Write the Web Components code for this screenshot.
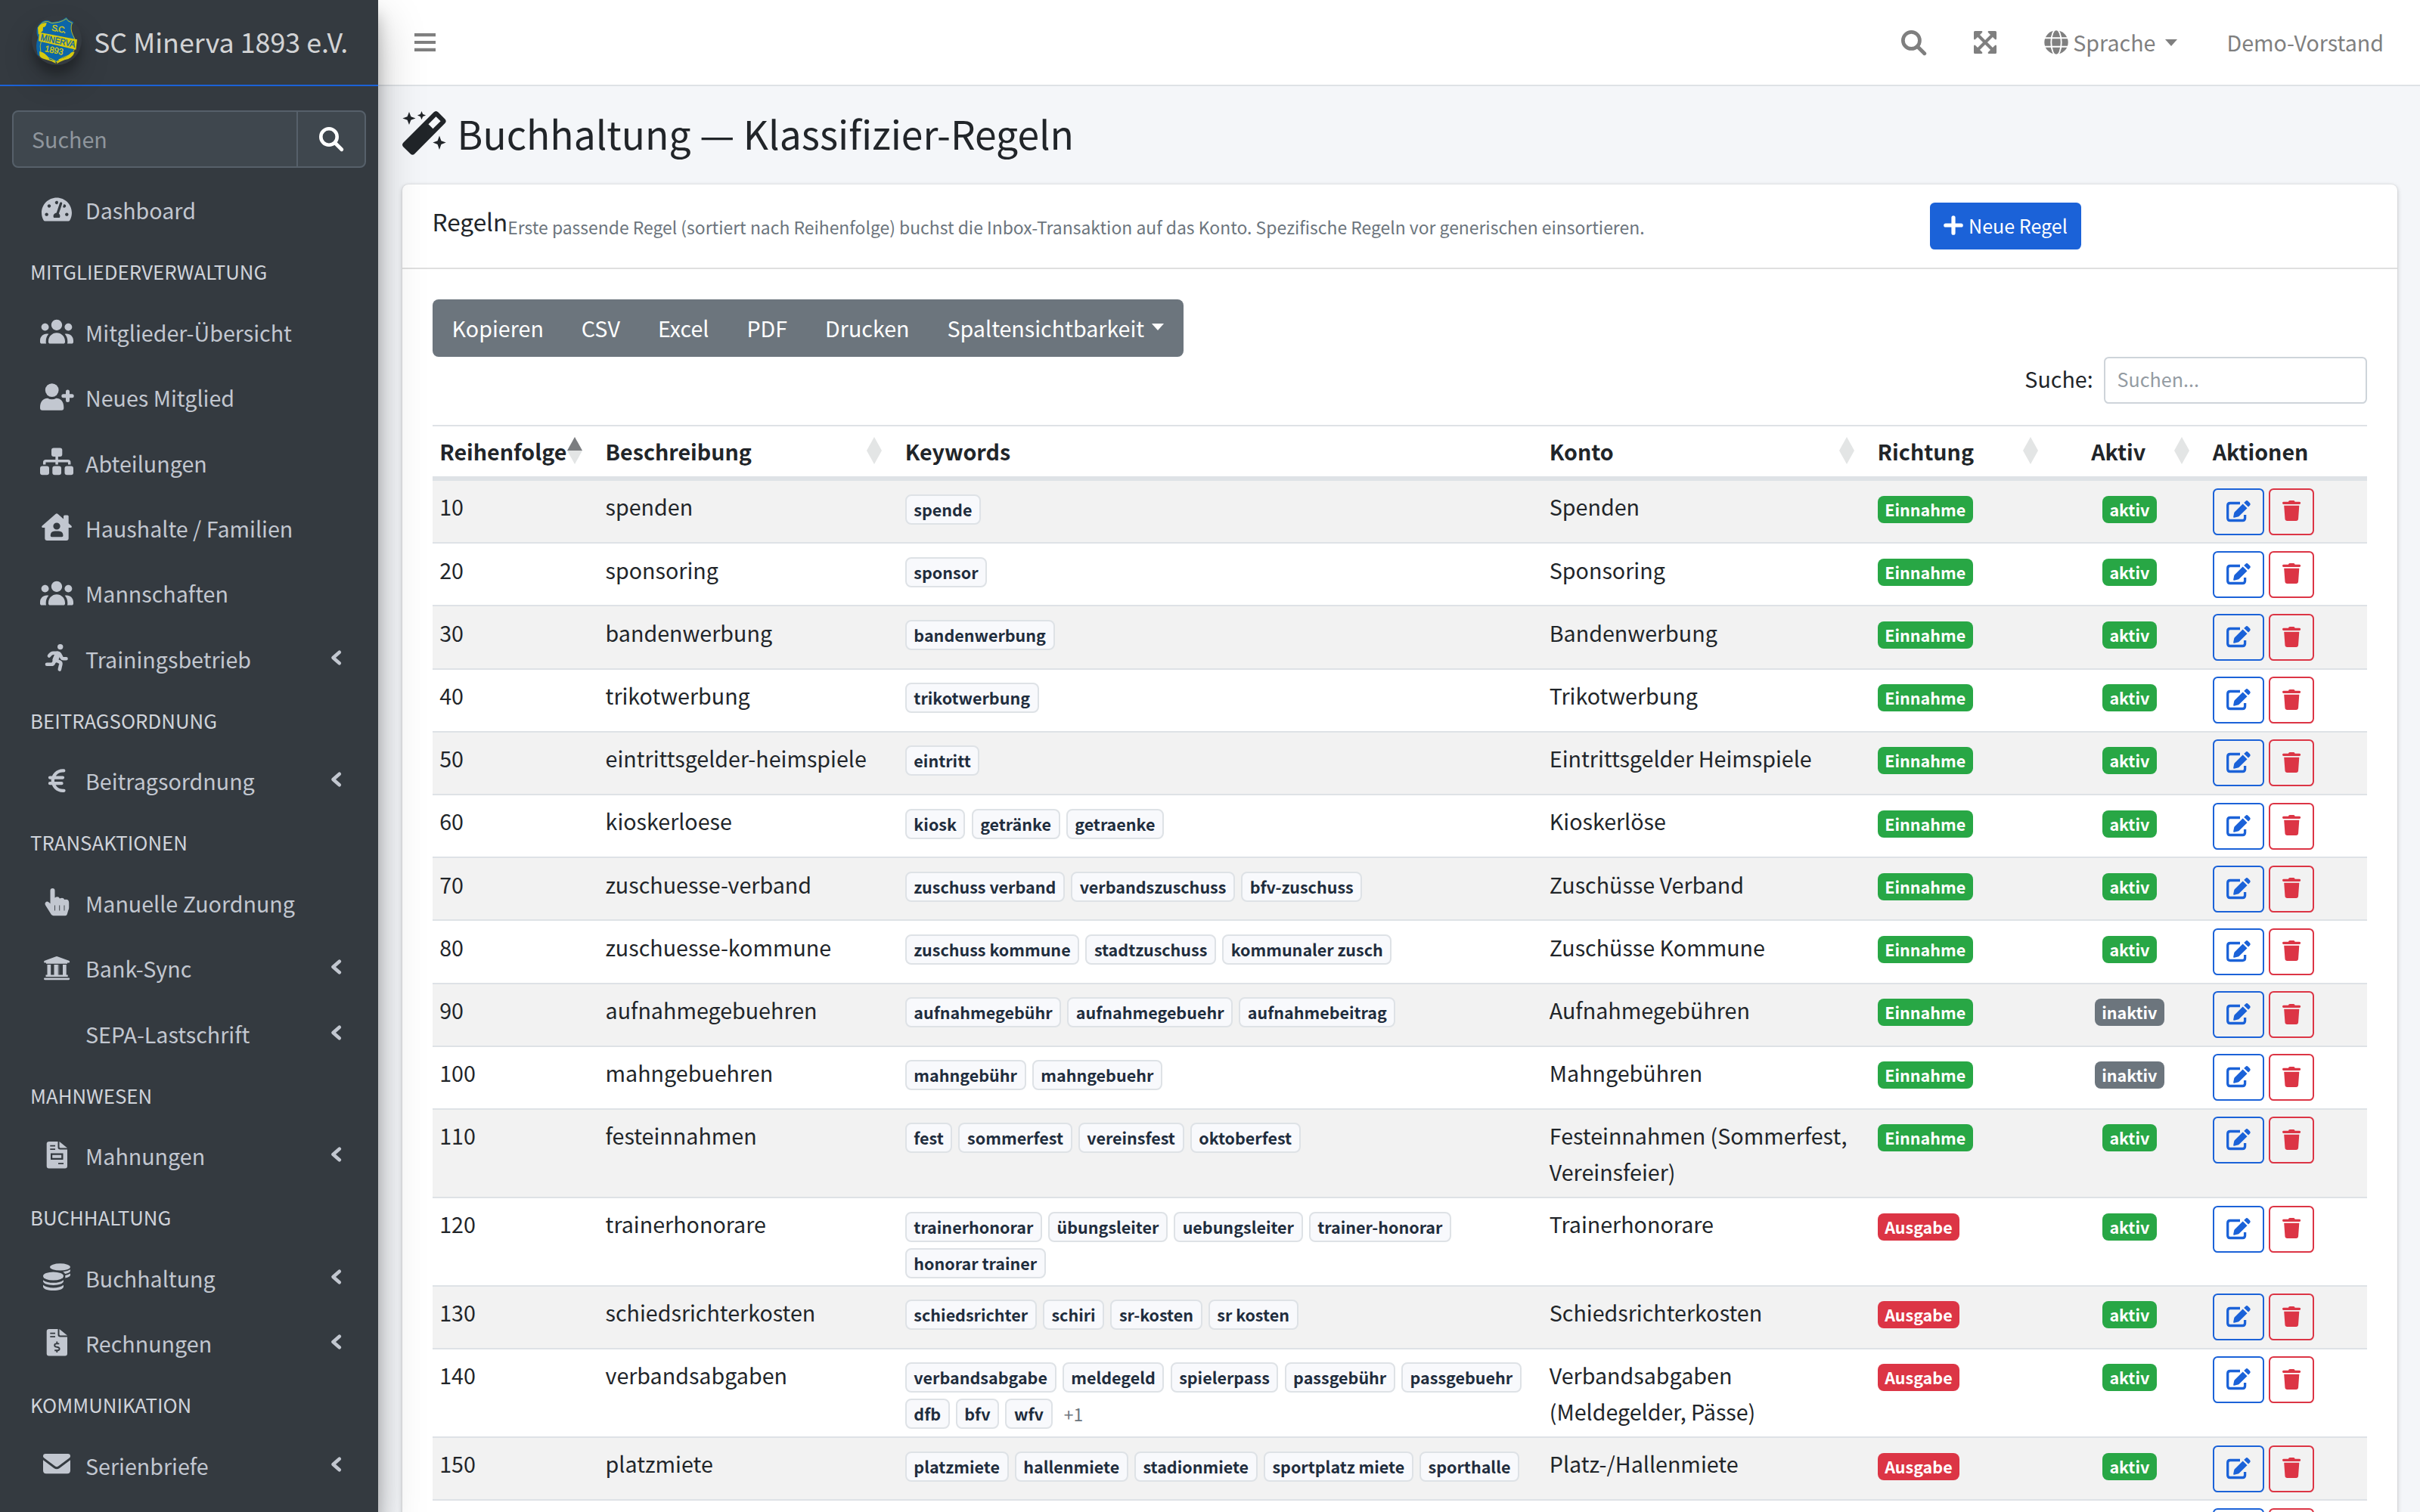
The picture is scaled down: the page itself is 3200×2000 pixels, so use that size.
<!DOCTYPE html>
<html lang="de">
<head>
<meta charset="utf-8">
<title>Buchhaltung — Klassifizier-Regeln</title>
<style>
    html, body {
        margin: 0;
        width: 3200px;
        height: 2000px;
        overflow: hidden;
    }

    body {
        font-family: "Noto Sans CJK SC", "Noto Sans", sans-serif;
        font-size: 28.65px;
        line-height: 48px;
        color: #212529;
        background: #f4f6f9;
        --primary: #1b62d8;
        --danger: #dc3545;
        --success: #28a745;
        --secondary: #6c757d;
        --line: #dee2e6;
    }
</style>
</head>
<body>
<app-shell></app-shell>

<script>
const ICONS = {
    gauge: [44, 44, '<path transform="translate(2 4.2) scale(.0694)" d="M288 32C128.94 32 0 160.94 0 320c0 52.8 14.25 102.26 39.06 144.8 5.61 9.62 16.3 15.2 27.44 15.2h443c11.14 0 21.83-5.58 27.44-15.2C561.75 422.26 576 372.8 576 320c0-159.06-128.94-288-288-288zm0 64c14.71 0 26.58 10.13 30.32 23.65-1.11 2.26-2.64 4.23-3.45 6.67l-9.22 27.67c-5.13 3.49-10.97 6.01-17.64 6.01-17.67 0-32-14.33-32-32S270.33 96 288 96zM96 384c-17.67 0-32-14.33-32-32s14.33-32 32-32 32 14.33 32 32-14.33 32-32 32zm48-160c-17.67 0-32-14.33-32-32s14.33-32 32-32 32 14.33 32 32-14.33 32-32 32zm246.77-72.41l-61.33 184C343.13 347.33 352 364.54 352 384c0 11.72-3.38 22.55-8.88 32H232.88c-5.5-9.45-8.88-20.28-8.88-32 0-33.94 26.5-61.43 59.9-63.59l61.34-184.01c4.17-12.56 17.73-19.45 30.36-15.17 12.57 4.19 19.35 17.79 15.17 30.36zm14.66 57.2l15.52-46.55c3.47-1.29 7.13-2.23 11.05-2.23 17.67 0 32 14.33 32 32s-14.33 32-32 32c-11.38-.01-20.89-6.28-26.57-15.22zM480 384c-17.67 0-32-14.33-32-32s14.33-32 32-32 32 14.33 32 32-14.33 32-32 32z"/>'],
    users: [44, 44, '<path transform="translate(0 1.2) scale(.06875)" d="M320 80C377.4 80 424 126.6 424 184C424 241.4 377.4 288 320 288C262.6 288 216 241.4 216 184C216 126.6 262.6 80 320 80zM96 152C135.8 152 168 184.2 168 224C168 263.8 135.8 296 96 296C56.2 296 24 263.8 24 224C24 184.2 56.2 152 96 152zM0 480C0 409.3 57.3 352 128 352C140.8 352 153.2 353.9 164.9 357.4C132 394.2 112 442.8 112 496L112 512C112 523.4 114.4 534.2 118.7 544L32 544C14.3 544 0 529.7 0 512L0 480zM521.3 544C525.6 534.2 528 523.4 528 512L528 496C528 442.8 508 394.2 475.1 357.4C486.8 353.9 499.2 352 512 352C582.7 352 640 409.3 640 480L640 512C640 529.7 625.7 544 608 544L521.3 544zM472 224C472 184.2 504.2 152 544 152C583.8 152 616 184.2 616 224C616 263.8 583.8 296 544 296C504.2 296 472 263.8 472 224zM160 496C160 407.6 231.6 336 320 336C408.4 336 480 407.6 480 496L480 512C480 529.7 465.7 544 448 544L192 544C174.3 544 160 529.7 160 512L160 496z"/>'],
    userPlus: [44, 44, '<circle cx="15.7" cy="13.1" r="8.9"/><path d="M0 35.5C0 28 4.500 23.700 10 23.700q5.700 3 11.400 0c5.500 0 9.900 4.300 9.900 11.800v1.200a3 3 0 0 1-3 3H3a3 3 0 0 1-3-3z"/><path d="M36.500 15v11.600M30.800 20.800h11.400" fill="none" stroke="currentColor" stroke-width="5" stroke-linecap="round"/>'],
    sitemap: [44, 44, '<rect x="15" y="3.6" width="14.3" height="11.4" rx="3"/><rect y="27.6" width="12" height="11.7" rx="3"/><rect x="16.3" y="27.6" width="11.7" height="11.7" rx="3"/><rect x="32.5" y="27.6" width="11.5" height="11.7" rx="3"/><path d="M22.100 15v10.600M5.700 25.600v-2.900q0-2 2-2h29q2 0 2 2v2.900" fill="none" stroke="currentColor" stroke-width="3.5"/>'],
    house: [44, 44, '<path fill-rule="evenodd" d="M20.400 3.900q1.600-1.400 3.200 0l7.400 6.500V7q0-1.500 1.500-1.500h3.700q1.500 0 1.500 1.500v9.200l3.700 3.300q1.300 1.300-.2 2.600h-3.500V36q0 3-3 3H9.300q-3 0-3-3V22.100H2.900q-1.600-1.300-.2-2.600zM22 15.400a4.600 4.600 0 1 0 .010 9.200 4.600 4.600 0 0 0 0-9.200zM13.700 32.500q0 1.700 1.700 1.700h13.400q1.700 0 1.700-1.700 0-6-6-6h-4.800q-6 0-6 6z"/>'],
    running: [44, 44, '<circle cx="26.7" cy="7.6" r="3.7"/><g fill="none" stroke="currentColor" stroke-linecap="round" stroke-linejoin="round"><path stroke-width="4.6" d="M12 19.500q2.500-3.800 5.500-3.800h5.500q2.500 0 3.600 2.500l1.900 3.600q.8 1.400 2.400 1.400h3.600M9 30.700h6q2 0 2.800-1.600l.8-1.600M20.500 25l5.400 2.600q1.800 1 1.500 2.800l-1.600 7.200"/><path stroke-width="7.5" d="M23.200 17.500l-3 7.300"/></g>'],
    euro: [44, 44, '<path d="M31.300 9.400h-1.300a13.200 13.200 0 0 0 0 26.400h1.500M13 18.600h17M13 26.200h15.500" fill="none" stroke="currentColor" stroke-width="4.3" stroke-linecap="round"/>'],
    hand: [44, 44, '<path d="M13.500 6a3 3 0 0 1 6 0v9.500q4.500-3 6.500 1 4.500-2.300 6.300 1.500 5.800-1.200 5.900 4v6c0 2-.5 3.500-1.200 5l-1.200 4.300q-.5 1.900-2.500 1.900H17.700q-1.500 0-2.700-1.100L7 25.300q-1.300-2.200.3-3.900 2-1.700 4.200 0l2 1.800z"/><path d="M19.500 25.500v7M25.700 25.500v7M32 25.500v7" stroke="#343a40" stroke-width=".9"/>'],
    bank: [44, 44, '<path d="M21 7.300q1-.5 2 0l15.200 5.400q1 .5 1 1.500 0 1.400-1.500 1.400H36v1.200H8v-1.200H6.500Q5 15.600 5 14.200q0-1 1-1.500zM9.500 18h4.700v13.500h4.300V18h5.300v13.500h.5V18h1v13.500h4.700V18h4.700v13.500h2v2.600H7.500v-2.600h2zM6.300 35.400h31.400q1.500 0 1.500 1.400t-1.500 1.400H6.300Q5 38.200 5 36.800t1.300-1.400z"/><path d="M24 18h2v13.500h-2z" fill="#343a40" opacity=".5"/>'],
    invoice: [44, 44, '<path fill-rule="evenodd" d="M12 4h11.500v7.500q0 3 3 3H36v22q0 3-3 3H11.700q-3 0-3-3V7q0-3 3.300-3zM25.500 4L36 12.500h-9q-1.500 0-1.500-1.500zM13.300 8.800v1.700H20V8.800zm0 4.500V15H20v-1.700zM14 19.500v8.500h16.500v-8.500zm2.200 2.200h12v4.100h-12zM24 32.300V34h7v-1.700z"/>'],
    invoiceDollar: [44, 44, '<path fill-rule="evenodd" d="M12 4h11.500v7.500q0 3 3 3H36v22q0 3-3 3H11.700q-3 0-3-3V7q0-3 3.300-3zM25.500 4L36 12.500h-9q-1.500 0-1.500-1.500zM13.300 8.800v1.700H20V8.800zm0 4.500V15H20v-1.700z"/><path d="M25.300 23.400h-3.800q-2.300.2-2.300 2t2.300 2.200l1.800.4q2.300.5 2.300 2.300t-2.400 2h-4M22.300 20.500v3M22.300 32v3" fill="none" stroke="#343a40" stroke-width="1.9"/>'],
    coins: [44, 44, '<ellipse cx="26.5" cy="7.9" rx="13.4" ry="4.6"/><path d="M31.500 14q5-.6 8.500-2.700v1.500q0 3-7 4.300-1-1.800-3-3zM33.300 19q4-.6 6.700-2.400v1.700q0 3-6.700 4.200z"/><ellipse cx="17.5" cy="20" rx="13.5" ry="5.6"/><path d="M4 25.200c3.500 2.700 8 3.600 13.500 3.600s10-.9 13.500-3.600v1.600c0 3-6 5.200-13.500 5.200S4 29.800 4 26.800zM4 31.800c3.500 2.700 8 3.600 13.500 3.600s10-.9 13.500-3.600v2.100c0 3-6 5.200-13.500 5.200S4 36.900 4 33.900z"/>'],
    envelope: [44, 44, '<path d="M7.300 8h29.400Q40 8 40 11.200q0 1.500-1.300 2.400L24 24.600q-2 1.500-4 0L5.300 13.600Q4 12.700 4 11.200 4 8 7.300 8zM4 16.200l14.300 10.700q3.700 2.700 7.400 0L40 16.200V30q0 4.200-4.200 4.200H8.200Q4 34.200 4 30z"/>'],
    search: [32, 32, '<circle cx="13" cy="13" r="10.7" fill="none" stroke="currentColor" stroke-width="4.6"/><path d="M21 21l8.800 8.800" stroke="currentColor" stroke-width="4.8" stroke-linecap="round"/>'],
    expand: [30, 30, '<path d="M5 5l20 20M25 5L5 25" stroke="currentColor" stroke-width="4.2"/><path d="M1.500 0h8.700q2 .5.600 2.300L2.300 10.800Q.5 12.300 0 10.200V1.500Q0 0 1.500 0zM28.500 0h-8.700q-2 .5-.6 2.300l8.500 8.500q1.800 1.500 2.300-.6V1.500Q30 0 28.500 0zM1.500 30h8.700q2-.5.600-2.300l-8.500-8.500q-1.800-1.500-2.300.6v8.700Q0 30 1.500 30zM28.500 30h-8.700q-2-.5-.6-2.300l8.500-8.500q1.800-1.500 2.300.6v8.700q0 1.500-1.500 1.500z"/>'],
    globe: [32, 32, '<circle cx="16" cy="16" r="15.7"/><path d="M0 10.300h32M0 21.700h32" stroke="#fff" stroke-width="1.9"/><ellipse cx="16" cy="16" rx="6.7" ry="17" fill="none" stroke="#fff" stroke-width="1.9"/>'],
    bars: [28, 24, '<path d="M0 0h28v4.200H0zM0 9.900h28v4.200H0zM0 19.800h28V24H0z"/>'],
    wand: [58, 58, '<path fill-rule="evenodd" d="M41.500 1.500q3-3 6 0l8.700 8.700q3 3 0 6L16.500 56.300q-3 3-6 0L1.500 47.500q-3-3 0-6zM44.500 7.200L34.500 17.300l6 6L50.600 13.200z"/><path d="M9 1l2.400 6.200L17.500 9.500l-6.100 2.300L9 18 6.600 11.800.4 9.500l6.200-2.300zM25.500 0l1.600 4 4 1.600-4 1.600-1.600 4-1.600-4-4-1.600 4-1.600zM49 32.500l2.400 6.700 6.300 2.400-6.300 2.400L49 51l-2.400-7-6.200-2.400 6.200-2.400z"/>'],
    plus: [26, 26, '<path d="M13 2.800v20.400M2.800 13h20.400" stroke="currentColor" stroke-width="5.2" stroke-linecap="round"/>'],
    edit: [32, 28, '<path d="M18 3.500H5Q1.700 3.500 1.700 6.800v16.400q0 3.300 3.300 3.300h16.300q3.300 0 3.300-3.300V19" fill="none" stroke="currentColor" stroke-width="3.3"/><path d="M25.300.9q1.700-1.600 3.400 0l2.300 2.300q1.600 1.700 0 3.400l-2 2L23.200 2.900zM21.700 4.400l5.800 5.800L16.800 20.800q-.6.600-1.500.8l-5 1.100q-1.400.2-1.100-1.200l1-4.900q.2-.9.900-1.600z"/>'],
    trash: [26, 28, '<path d="M8.500 1.400q.4-1.400 2-1.400h4.600q1.600 0 2 1.400l.2.400h6.200q1.700 0 1.700 1.700t-1.700 1.700h-22Q0 5.200 0 3.500t1.500-1.700h6.700zM2.300 7h20.900l-1.300 18.200q-.3 2.900-3 2.900H6.600q-2.700 0-3-2.900z"/>'],
    chevron: [14, 20, '<path d="M11.800 2.700L3.500 10l8.300 7.300" fill="none" stroke="currentColor" stroke-width="4.6" stroke-linecap="round" stroke-linejoin="round"/>'],
    caret: [16, 9, '<path d="M0 0h16L8 9z"/>']
};

function define( name, html, setup ) {
    const template = document.createElement('template');
    template.innerHTML = html;
    window.customElements.define( name, class extends HTMLElement {
        connectedCallback() {
            if ( this.shadowRoot ) return;
            this.attachShadow( { mode: "open" } );
            this.shadowRoot.appendChild( template.content.cloneNode( true ) );
            if ( setup ) setup.call( this, this.shadowRoot );
        }
    } );
}

define( 'app-icon', `
    <style>
        :host { display: block; flex: none; }
        svg { display: block; fill: currentColor; overflow: visible; }
    </style>
`, function ( root ) {
    const [ w, h, body ] = ICONS[ this.getAttribute('name') ];
    const width = Number( this.getAttribute('width') ) || w;
    root.innerHTML += `<svg viewBox="0 0 ${w} ${h}" width="${width}" height="${width * h / w}">${body}</svg>`;
} );

define( 'club-logo', `
    <style>
        :host {
            display: block;
            width: 66px;
            height: 66px;
            border-radius: 50%;
            box-shadow: 0 20px 40px rgba(0,0,0,.19), 0 12px 12px rgba(0,0,0,.23);
        }
        svg { display: block; }
        text { font-family: "Liberation Sans", sans-serif; stroke-width: 1.2; }
    </style>
    <svg viewBox="36 30 198 198" width="66" height="66">
        <path d="M57 80Q72 54 88 51q14-3 20 3 8 6 14 3 18-1 38-10l13-9 9 11 19 8q2 5-5 9-7 17 1 38 13 16 12 42-2 36-30 47-30 8-49 27-20-15-48-22-27-6-24-18-9-30 3-62-9-15-4-38z" fill="#0c66a8"/>
        <path d="M62 80Q75 58 90 56q12-2 18 3 8 5 16 2 20-1 36-9l13-8 7 9 16 8q-9 22 3 48 11 14 10 40-2 31-29 41-28 8-45 25-18-13-45-20-22-6-18-15-7-26 4-58-7-20-6-42z" fill="none" stroke="#d6c90e" stroke-width="2.5"/>
        <path d="M60 80q12-20 35-20-2 18-14 18l-1 14-18 15zM66 98l150 29-5 40-148-34zM66 174q28 5 40 32l21 5 5 11q-20-11-45-17-20-6-20-16zM206 176q-8 26-40 32-20 8-31 15l2-12 7 1q-5-9 5-9 25-3 44-25z" fill="#d6c90e"/>
        <text transform="translate(113 91) rotate(11)" font-size="34" textLength="58" fill="#d6c90e" stroke="#d6c90e">S.C.</text>
        <text transform="translate(69 129) rotate(12)" font-size="35" textLength="140" lengthAdjust="spacingAndGlyphs" fill="#0c66a8" stroke="#0c66a8">MINERVA</text>
        <text transform="translate(86 174) rotate(11)" font-size="35" textLength="74" lengthAdjust="spacingAndGlyphs" fill="#d6c90e" stroke="#d6c90e">1893</text>
    </svg>
` );

define( 'nav-item', `
    <style>
        :host {
            display: flex;
            align-items: center;
            height: 80px;
            margin: 0 16px 6.4px;
            padding: 0 33px 0 37px;
            color: #c2c7d0;
        }
        .icon { width: 44px; height: 44px; margin: 0 16px 4px 0; }
        .label { flex: 1; padding-bottom: 1px; white-space: nowrap; }
        .arrow { margin-bottom: 5px; }
    </style>
    <div class="icon"></div>
    <span class="label"><slot></slot></span>
`, function ( root ) {
    if ( this.hasAttribute('icon') ) {
        root.querySelector('.icon').innerHTML = `<app-icon name="${this.getAttribute('icon')}"></app-icon>`;
    }
    if ( this.hasAttribute('open') ) {
        root.querySelector('.label').insertAdjacentHTML( 'afterend', '<app-icon class="arrow" name="chevron"></app-icon>' );
    }
} );

define( 'nav-header', `
    <style>
        :host {
            display: block;
            padding: 12px 40px 20px;
            font-size: 25.8px;
            line-height: 43.2px;
            color: #d0d4db;
            text-transform: uppercase;
        }
    </style>
    <slot></slot>
` );

define( 'side-bar', `
    <style>
        :host {
            display: block;
            position: relative;
            z-index: 2;
            width: 500px;
            height: 2000px;
            background: #343a40;
            box-shadow: 0 28px 56px rgba(0,0,0,.25), 0 20px 20px rgba(0,0,0,.22);
        }
        .brand {
            display: flex;
            box-sizing: border-box;
            height: 114px;
            padding: 20px 0 0 42px;
            gap: 16px;
            border-bottom: 2px solid var( --primary );
            color: rgba(255,255,255,.8);
            font-size: 35.8px;
            line-height: 68px;
            white-space: nowrap;
        }
        .search {
            display: flex;
            box-sizing: border-box;
            height: 76px;
            margin: 32px 16px 16.8px;
            border: 2px solid #56606a;
            border-radius: 8px;
            background: #3f474e;
            color: #8f969d;
            line-height: 72px;
        }
        .search span { flex: 1; padding-left: 24px; }
        .search div {
            display: flex;
            align-items: center;
            justify-content: center;
            width: 88px;
            border-left: 2px solid #56606a;
            color: #fff;
        }
    </style>
    <div class="brand"><club-logo></club-logo><span>SC Minerva 1893 e.V.</span></div>
    <div class="search"><span>Suchen</span><div><app-icon name="search"></app-icon></div></div>
    <slot></slot>
` );

define( 'top-bar', `
    <style>
        :host {
            display: flex;
            align-items: center;
            box-sizing: border-box;
            height: 114px;
            padding: 0 48px;
            border-bottom: 2px solid var( --line );
            background: #fff;
            color: #7f7f7f;
        }
        .space { flex: 1; }
        span { padding-bottom: 1px; white-space: nowrap; }
    </style>
    <app-icon name="bars"></app-icon>
    <div class="space"></div>
    <app-icon name="search" width="33" style="margin-right: 63px"></app-icon>
    <app-icon name="expand" style="margin-right: 63px"></app-icon>
    <app-icon name="globe" style="margin-right: 6px"></app-icon>
    <span style="margin-right: 13px">Sprache</span>
    <app-icon name="caret" style="margin-right: 65px"></app-icon>
    <span>Demo-Vorstand</span>
` );

define( 'export-bar', `
    <style>
        :host {
            display: flex;
            width: max-content;
            height: 76px;
            border-radius: 8px;
            background: var( --secondary );
            color: #fff;
            line-height: 75px;
        }
        span { display: flex; padding: 0 26px; white-space: nowrap; }
        span + span { margin-left: -2px; }
        app-icon { margin: 32px 0 0 10px; }
    </style>
    <span>Kopieren</span><span>CSV</span><span>Excel</span><span>PDF</span><span>Drucken</span>
    <span>Spaltensichtbarkeit<app-icon name="caret"></app-icon></span>
` );

define( 'sort-mark', `
    <style>
        :host { display: block; }
        svg { display: block; }
        path { fill: #e3e5e5; }
        :host([asc]) .up { fill: #7b7d80; }
    </style>
    <svg width="20" height="36" viewBox="0 0 20 36"><path class="up" d="M10 0l10 18H0z"/><path d="M10 36l10-18H0z"/></svg>
` );

const GRID = `
    display: grid;
    grid-template-columns: 219.4px 396.2px 852px 433.8px 242.6px 200.6px 1fr;
`;

define( 'table-head', `
    <style>
        :host {
            ${GRID}
            box-sizing: border-box;
            height: 74px;
            border-top: 2px solid var( --line );
            border-bottom: 6px solid var( --line );
            font-weight: 700;
            line-height: 65px;
        }
        div { display: flex; justify-content: space-between; padding: 0 21px 0 9.6px; white-space: nowrap; }
        div span { width: 0; }
        .center { justify-content: flex-end; }
        .center span { width: auto; margin-right: 38px; }
        sort-mark { margin-top: 14px; }
    </style>
    <div><span>Reihenfolge</span><sort-mark asc></sort-mark></div>
    <div><span>Beschreibung</span><sort-mark></sort-mark></div>
    <div><span>Keywords</span></div>
    <div><span>Konto</span><sort-mark></sort-mark></div>
    <div><span>Richtung</span><sort-mark></sort-mark></div>
    <div class="center"><span>Aktiv</span><sort-mark></sort-mark></div>
    <div><span>Aktionen</span></div>
` );

define( 'app-badge', `
    <style>
        :host {
            display: block;
            box-sizing: border-box;
            width: max-content;
            height: 36px;
            padding: 0 9.6px;
            border-radius: 8px;
            font-size: 21.5px;
            font-weight: 700;
            line-height: 35px;
            white-space: nowrap;
            color: #fff;
            background: var( --success );
        }
        :host([kind="red"]) { background: var( --danger ); }
        :host([kind="grey"]) { background: var( --secondary ); }
        :host([kind="keyword"]) {
            height: 40px;
            border: 2px solid var( --line );
            color: #1f2d3d;
            background: #f8f9fc;
        }
    </style>
    <slot></slot>
` );

define( 'row-actions', `
    <style>
        :host { display: flex; gap: 6.4px; }
        div {
            display: flex;
            align-items: center;
            justify-content: center;
            box-sizing: border-box;
            width: 68px;
            height: 62px;
            border: 2px solid currentColor;
            border-radius: 6.4px;
            color: var( --primary );
        }
        .delete { width: 60px; color: var( --danger ); }
        app-icon { margin-bottom: 2px; }
    </style>
    <div><app-icon name="edit"></app-icon></div>
    <div class="delete"><app-icon name="trash" width="25"></app-icon></div>
` );

define( 'rule-row', `
    <style>
        :host {
            ${GRID}
            box-sizing: border-box;
            min-height: 83.2px;
            border-bottom: 2px solid var( --line );
        }
        :host([odd]) { background: #f2f2f2; }
        .cell { padding: 10.4px 9.6px 8.8px; }
        .keywords { display: flex; flex-wrap: wrap; align-content: flex-start; gap: 8px 8.1px; padding: 17.6px 0 9px 9.6px; }
        .badge { padding-top: 19.6px; }
        .badge.mid { display: flex; justify-content: center; }
        .actions { padding-top: 9.6px; padding-bottom: 0; }
        .more { margin-left: 7px; font-size: 22.9px; line-height: 40px; color: var( --secondary ); }
    </style>
    <div class="cell"><slot name="order"></slot></div>
    <div class="cell"><slot name="text"></slot></div>
    <div class="cell keywords"></div>
    <div class="cell"><slot name="account"></slot></div>
    <div class="cell badge direction"></div>
    <div class="cell badge mid state"></div>
    <div class="cell actions"><row-actions></row-actions></div>
`, function ( root ) {
    const { keywords, direction, active, more } = this.dataset;
    if ( !direction ) return;
    root.querySelector('.keywords').innerHTML =
        keywords.split('|').map( k => `<app-badge kind="keyword">${k}</app-badge>` ).join('') +
        ( more ? `<span class="more">${more}</span>` : '' );
    root.querySelector('.direction').innerHTML =
        `<app-badge kind="${direction === 'Ausgabe' ? 'red' : 'green'}">${direction}</app-badge>`;
    root.querySelector('.state').innerHTML =
        `<app-badge kind="${active === 'inaktiv' ? 'grey' : 'green'}">${active}</app-badge>`;
} );

const RULES = [
    [ 10, 'spenden', 'spende', 'Spenden' ],
    [ 20, 'sponsoring', 'sponsor', 'Sponsoring' ],
    [ 30, 'bandenwerbung', 'bandenwerbung', 'Bandenwerbung' ],
    [ 40, 'trikotwerbung', 'trikotwerbung', 'Trikotwerbung' ],
    [ 50, 'eintrittsgelder-heimspiele', 'eintritt', 'Eintrittsgelder Heimspiele' ],
    [ 60, 'kioskerloese', 'kiosk|getränke|getraenke', 'Kioskerlöse' ],
    [ 70, 'zuschuesse-verband', 'zuschuss verband|verbandszuschuss|bfv-zuschuss', 'Zuschüsse Verband' ],
    [ 80, 'zuschuesse-kommune', 'zuschuss kommune|stadtzuschuss|kommunaler zusch', 'Zuschüsse Kommune' ],
    [ 90, 'aufnahmegebuehren', 'aufnahmegebühr|aufnahmegebuehr|aufnahmebeitrag', 'Aufnahmegebühren', 'Einnahme', 'inaktiv' ],
    [ 100, 'mahngebuehren', 'mahngebühr|mahngebuehr', 'Mahngebühren', 'Einnahme', 'inaktiv' ],
    [ 110, 'festeinnahmen', 'fest|sommerfest|vereinsfest|oktoberfest', 'Festeinnahmen (Sommerfest,<br>Vereinsfeier)' ],
    [ 120, 'trainerhonorare', 'trainerhonorar|übungsleiter|uebungsleiter|trainer-honorar|honorar trainer', 'Trainerhonorare', 'Ausgabe' ],
    [ 130, 'schiedsrichterkosten', 'schiedsrichter|schiri|sr-kosten|sr kosten', 'Schiedsrichterkosten', 'Ausgabe' ],
    [ 140, 'verbandsabgaben', 'verbandsabgabe|meldegeld|spielerpass|passgebühr|passgebuehr|dfb|bfv|wfv', 'Verbandsabgaben<br>(Meldegelder, Pässe)', 'Ausgabe', 'aktiv', '+1' ],
    [ 150, 'platzmiete', 'platzmiete|hallenmiete|stadionmiete|sportplatz miete|sporthalle', 'Platz-/Hallenmiete', 'Ausgabe' ]
];

define( 'rules-table', `
    <style>
        :host { display: block; }
        rule-row span { white-space: nowrap; }
    </style>
    <table-head></table-head>
    <div class="rows"></div>
`, function ( root ) {
    root.querySelector('.rows').innerHTML = RULES.map( ( [ order, text, keywords, account, direction = 'Einnahme', active = 'aktiv', more = '' ], i ) => `
        <rule-row ${i % 2 ? '' : 'odd'} data-keywords="${keywords}" data-direction="${direction}" data-active="${active}" data-more="${more}">
            <span slot="order">${order}</span>
            <span slot="text">${text}</span>
            <span slot="account">${account}</span>
        </rule-row>` ).join('') + '<rule-row></rule-row>';
} );

define( 'rules-card', `
    <style>
        :host {
            display: block;
            height: 1900px;
            border-radius: 8px;
            background: #fff;
            box-shadow: 0 0 2px rgba(0,0,0,.125), 0 2px 6px rgba(0,0,0,.2);
        }
        header {
            display: grid;
            grid-template-columns: 1980.4px 1fr;
            box-sizing: border-box;
            height: 112px;
            padding: 24px 40px 0;
            border-bottom: 2px solid rgba(0,0,0,.125);
            white-space: nowrap;
        }
        .title { display: flex; }
        .title b { font-weight: 400; font-size: 31.5px; line-height: 48px; }
        .title small { font-size: 22.92px; line-height: 64px; color: var( --secondary ); }
        .new {
            display: flex;
            align-items: center;
            gap: 7px;
            box-sizing: border-box;
            width: 200px;
            height: 62px;
            padding-left: 18px;
            border-radius: 6.4px;
            font-size: 25.1px;
            color: #fff;
            background: var( --primary );
        }
        .new app-icon { margin-bottom: 3px; }
        .new span { padding-bottom: 2px; }
        .body { padding: 40px 40px 0; }
        .filter {
            display: flex;
            justify-content: flex-end;
            gap: 14px;
            height: 62px;
            margin-bottom: 28px;
            line-height: 58px;
        }
        .filter div {
            box-sizing: border-box;
            width: 348px;
            padding-left: 16px;
            border: 2px solid #ced4da;
            border-radius: 6.4px;
            font-size: 25.1px;
            line-height: 55px;
            color: #939ba2;
        }
    </style>
    <header>
        <div class="title"><b>Regeln</b><small>Erste passende Regel (sortiert nach Reihenfolge) buchst die Inbox-Transaktion auf das Konto. Spezifische Regeln vor generischen einsortieren.</small></div>
        <div class="new"><app-icon name="plus"></app-icon><span>Neue Regel</span></div>
    </header>
    <div class="body">
        <export-bar></export-bar>
        <div class="filter"><span>Suche:</span><div>Suchen...</div></div>
        <rules-table></rules-table>
    </div>
` );

define( 'page-title', `
    <style>
        :host {
            display: flex;
            gap: 15px;
            height: 97px;
            padding-top: 33px;
            font-size: 51.57px;
            line-height: 57px;
            white-space: nowrap;
        }
    </style>
    <app-icon name="wand"></app-icon><span><slot></slot></span>
` );

define( 'app-shell', `
    <style>
        :host {
            display: grid;
            grid-template-columns: 500px 2700px;
            height: 2000px;
            overflow: hidden;
        }
        main { min-width: 0; }
        .content { padding: 0 30.4px 0 31.6px; }
    </style>
    <side-bar>
        <nav-item icon="gauge">Dashboard</nav-item>
        <nav-header>Mitgliederverwaltung</nav-header>
        <nav-item icon="users">Mitglieder-Übersicht</nav-item>
        <nav-item icon="userPlus">Neues Mitglied</nav-item>
        <nav-item icon="sitemap">Abteilungen</nav-item>
        <nav-item icon="house">Haushalte / Familien</nav-item>
        <nav-item icon="users">Mannschaften</nav-item>
        <nav-item icon="running" open>Trainingsbetrieb</nav-item>
        <nav-header>Beitragsordnung</nav-header>
        <nav-item icon="euro" open>Beitragsordnung</nav-item>
        <nav-header>Transaktionen</nav-header>
        <nav-item icon="hand">Manuelle Zuordnung</nav-item>
        <nav-item icon="bank" open>Bank-Sync</nav-item>
        <nav-item open>SEPA-Lastschrift</nav-item>
        <nav-header>Mahnwesen</nav-header>
        <nav-item icon="invoice" open>Mahnungen</nav-item>
        <nav-header>Buchhaltung</nav-header>
        <nav-item icon="coins" open>Buchhaltung</nav-item>
        <nav-item icon="invoiceDollar" open>Rechnungen</nav-item>
        <nav-header>Kommunikation</nav-header>
        <nav-item icon="envelope" open>Serienbriefe</nav-item>
    </side-bar>
    <main>
        <top-bar></top-bar>
        <div class="content">
            <page-title>Buchhaltung — Klassifizier-Regeln</page-title>
            <rules-card></rules-card>
        </div>
    </main>
` );
</script>
</body>
</html>
